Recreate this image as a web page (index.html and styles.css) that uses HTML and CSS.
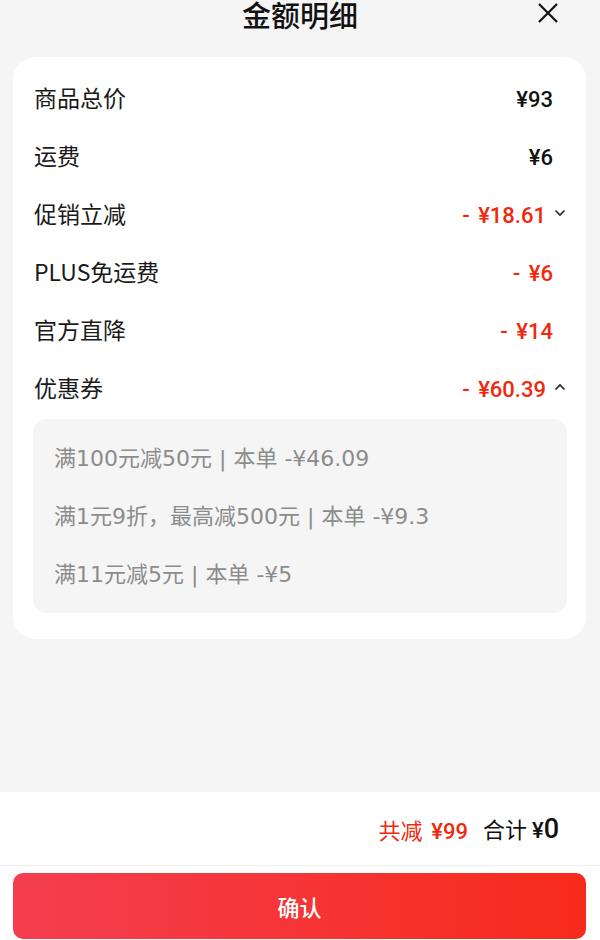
FILE: index.html
```html
<!DOCTYPE html>
<html lang="zh-CN">
<head>
    <meta charset="UTF-8">
    <meta name="viewport" content="width=device-width, initial-scale=1.0">
    <title>金额明细</title>
    <link rel="stylesheet" href="styles.css">
</head>
<body>

    <div class="page">
        <!-- 标题 -->
        <div class="header">
            <h1 class="title">金额明细</h1>
            <button class="close-btn" aria-label="关闭">
                <svg viewBox="0 0 22 22" width="22" height="22">
                    <path d="M2 2 L20 20 M20 2 L2 20" stroke="#111" stroke-width="2.2" fill="none"/>
                </svg>
            </button>
        </div>

        <!-- 明细卡片 -->
        <div class="card">
            <div class="row">
                <span class="label">商品总价</span>
                <span class="value">¥93</span>
            </div>
            <div class="row">
                <span class="label">运费</span>
                <span class="value">¥6</span>
            </div>
            <div class="row has-toggle">
                <span class="label">促销立减</span>
                <span class="value red">- ¥18.61</span>
                <svg class="chevron" viewBox="0 0 12 8" width="12" height="8">
                    <path d="M1.5 1.5 L6 6 L10.5 1.5" stroke="#222" stroke-width="1.6" fill="none"/>
                </svg>
            </div>
            <div class="row">
                <span class="label">PLUS免运费</span>
                <span class="value red">- ¥6</span>
            </div>
            <div class="row">
                <span class="label">官方直降</span>
                <span class="value red">- ¥14</span>
            </div>
            <div class="row has-toggle">
                <span class="label">优惠券</span>
                <span class="value red">- ¥60.39</span>
                <svg class="chevron" viewBox="0 0 12 8" width="12" height="8">
                    <path d="M1.5 6.5 L6 2 L10.5 6.5" stroke="#222" stroke-width="1.6" fill="none"/>
                </svg>
            </div>

            <div class="coupon-box">
                <div class="coupon">满100元减50元 | 本单 -¥46.09</div>
                <div class="coupon">满1元9折，最高减500元 | 本单 -¥9.3</div>
                <div class="coupon">满11元减5元 | 本单 -¥5</div>
            </div>
        </div>

        <!-- 底部合计 -->
        <div class="footer">
            <div class="total-row">
                <span class="saved">共减 <span class="saved-num">¥99</span></span>
                <span class="total">合计 <span class="yen">¥</span><span class="amount">0</span></span>
            </div>
            <div class="btn-wrap">
                <button class="confirm-btn">确认</button>
            </div>
        </div>
    </div>

</body>
</html>
```

FILE: styles.css
```css
body {
    margin: 0;
    padding: 0;
    background-color: #f5f5f5;
    font-family: "Noto Sans CJK SC", "Noto Sans", sans-serif;
    color: #1a1a1a;
}

.page {
    height: 940px;
    display: flex;
    flex-direction: column;
    overflow: hidden;
}

/* 标题 */
.header {
    height: 57px;
    display: flex;
    justify-content: center;
    align-items: flex-start;
    position: relative;
}

.title {
    margin: 0;
    font-size: 29px;
    font-weight: 500;
    line-height: 28px;
    color: #111;
}

.close-btn {
    position: absolute;
    top: 2px;
    right: 41px;
    padding: 0;
    border: none;
    background: none;
    line-height: 0;
}

/* 卡片 */
.card {
    margin: 0 14px 0 13px;
    padding: 11px 19px 26px 20px;
    background: #ffffff;
    border-radius: 22px;
}

.row {
    height: 58px;
    display: flex;
    align-items: center;
    padding-left: 1px;
}

.label {
    flex: 1;
    font-size: 23px;
    color: #1a1a1a;
}

.value {
    margin-right: 14px;
    padding-top: 4px;
    font-family: Roboto, "Noto Sans CJK SC", sans-serif;
    font-size: 22px;
    font-weight: 500;
    word-spacing: 3px;
    color: #111;
}

.value.red {
    color: #f2270c;
}

.has-toggle .value {
    margin-right: 0;
}

.chevron {
    margin: 0 1px 0 8px;
}

.coupon-box {
    margin-top: 3px;
    padding: 11px 21px 9px;
    background: #f5f5f5;
    border-radius: 13px;
}

.coupon {
    height: 58px;
    line-height: 58px;
    font-family: "DejaVu Sans", "Noto Sans CJK SC", sans-serif;
    font-size: 22px;
    color: #8c8c8c;
    white-space: nowrap;
}

/* 底部 */
.footer {
    margin-top: auto;
    background: #ffffff;
}

.total-row {
    height: 73px;
    display: flex;
    justify-content: flex-end;
    align-items: center;
    padding-right: 41px;
    border-bottom: 1px solid #f0f0f0;
}

.saved {
    font-size: 22px;
    color: #f2270c;
    margin-right: 15px;
}

.saved-num {
    margin-left: 4px;
    font-family: Roboto, "Noto Sans CJK SC", sans-serif;
    font-weight: 500;
}

.total {
    font-size: 22px;
    color: #111;
}

.yen {
    font-family: Roboto, "Noto Sans CJK SC", sans-serif;
    font-weight: 500;
}

.amount {
    font-family: Roboto, "Noto Sans CJK SC", sans-serif;
    font-size: 27px;
    font-weight: 500;
}

.btn-wrap {
    padding: 7px 14px 1px 13px;
}

.confirm-btn {
    display: block;
    width: 100%;
    height: 66px;
    border: none;
    border-radius: 10px;
    background: linear-gradient(to right, #f43e50, #f72b1b);
    color: #ffffff;
    font-family: inherit;
    font-size: 22px;
    font-weight: 500;
}
```
